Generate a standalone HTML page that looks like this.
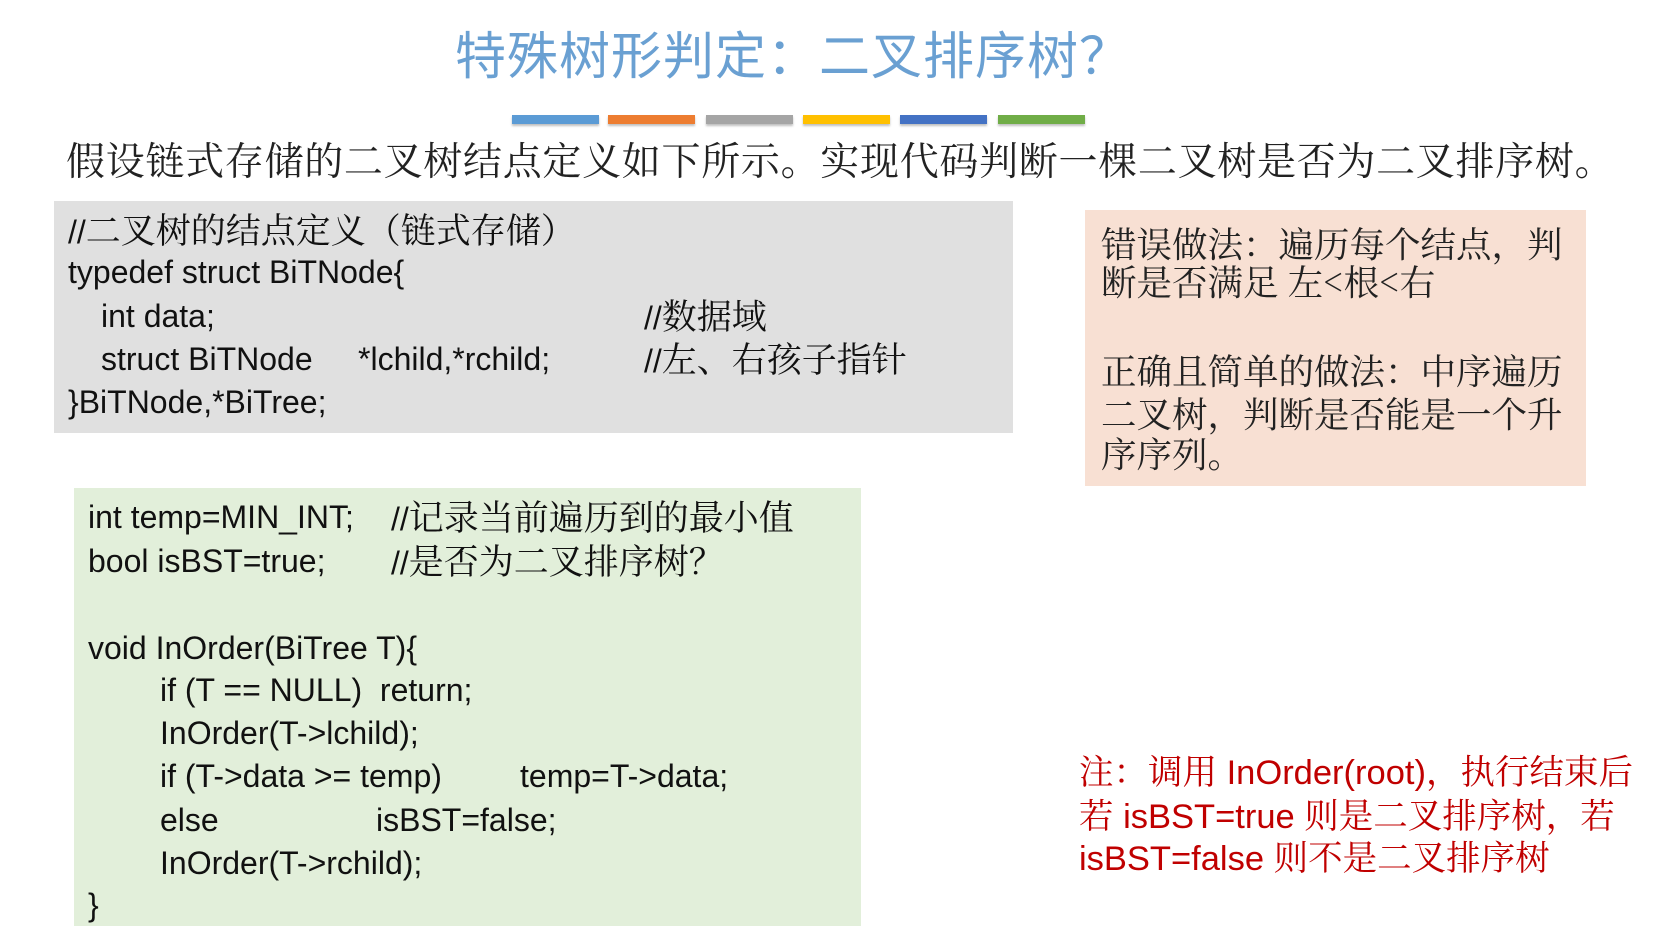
<!DOCTYPE html>
<html><head><meta charset="utf-8"><style>
body{margin:0;width:1671px;height:926px;background:#fff;position:relative;overflow:hidden;font-family:"Liberation Sans","Noto Serif CJK SC",serif}
.a{position:absolute;white-space:pre;line-height:1}
.title{left:455px;top:27px;font-family:"Noto Sans CJK SC",sans-serif;font-size:51px;color:#6aa0d2;letter-spacing:1px}
.bar{position:absolute;top:115px;height:9px;width:87px;box-shadow:0 2px 2px rgba(0,0,0,.25)}
.sub{left:66px;top:140px;font-family:"Noto Serif CJK SC",serif;font-size:39px;color:#222;letter-spacing:0.7px}
.box{position:absolute}
.c{font-size:32px;color:#111}
.c b{font-weight:normal;font-family:"Noto Serif CJK SC",serif;font-size:35px}
.p{font-family:"Noto Serif CJK SC",serif;font-size:35.5px;color:#222}
.r{font-size:34.5px;color:#c00000}
</style></head><body>
<div class="a title">特殊树形判定：二叉排序树？</div>
<div class="bar" style="left:512px;background:#5b9bd5"></div>
<div class="bar" style="left:608px;background:#ed7d31"></div>
<div class="bar" style="left:706px;background:#a5a5a5"></div>
<div class="bar" style="left:803px;background:#ffc000"></div>
<div class="bar" style="left:900px;background:#4472c4"></div>
<div class="bar" style="left:998px;background:#70ad47"></div>
<div class="a sub">假设链式存储的二叉树结点定义如下所示。实现代码判断一棵二叉树是否为二叉排序树。</div>

<div class="box" style="left:54px;top:201px;width:959px;height:232px;background:#e0e0e0"></div>
<div class="a c" style="left:68px;top:212px">//<b>二叉树的结点定义（链式存储）</b></div>
<div class="a c" style="left:68px;top:256px">typedef struct BiTNode{</div>
<div class="a c" style="left:101px;top:300px">int data;</div>
<div class="a c" style="left:644px;top:298px">//<b>数据域</b></div>
<div class="a c" style="left:101px;top:343px">struct BiTNode</div>
<div class="a c" style="left:358px;top:343px">*lchild,*rchild;</div>
<div class="a c" style="left:644px;top:341px">//<b>左、右孩子指针</b></div>
<div class="a c" style="left:68px;top:386px">}BiTNode,*BiTree;</div>

<div class="box" style="left:1085px;top:210px;width:501px;height:276px;background:#f8e0d3"></div>
<div class="a p" style="left:1101px;top:225px">错误做法：遍历每个结点，判</div>
<div class="a p" style="left:1101px;top:263px">断是否满足 左&lt;根&lt;右</div>
<div class="a p" style="left:1101px;top:352px">正确且简单的做法：中序遍历</div>
<div class="a p" style="left:1101px;top:395px">二叉树，判断是否能是一个升</div>
<div class="a p" style="left:1101px;top:435px">序序列。</div>

<div class="box" style="left:74px;top:488px;width:787px;height:438px;background:#e2efda"></div>
<div class="a c" style="left:88px;top:501px">int temp=MIN_INT;</div>
<div class="a c" style="left:391px;top:499px">//<b>记录当前遍历到的最小值</b></div>
<div class="a c" style="left:88px;top:545px">bool isBST=true;</div>
<div class="a c" style="left:391px;top:543px">//<b>是否为二叉排序树？</b></div>
<div class="a c" style="left:88px;top:632px">void InOrder(BiTree T){</div>
<div class="a c" style="left:160px;top:674px">if (T == NULL)  return;</div>
<div class="a c" style="left:160px;top:717px">InOrder(T-&gt;lchild);</div>
<div class="a c" style="left:160px;top:760px">if (T-&gt;data &gt;= temp)</div>
<div class="a c" style="left:520px;top:760px">temp=T-&gt;data;</div>
<div class="a c" style="left:160px;top:804px">else</div>
<div class="a c" style="left:376px;top:804px">isBST=false;</div>
<div class="a c" style="left:160px;top:847px">InOrder(T-&gt;rchild);</div>
<div class="a c" style="left:88px;top:889px">}</div>

<div class="a r" style="left:1079px;top:756px">注：调用 InOrder(root)，执行结束后</div>
<div class="a r" style="left:1079px;top:800px">若 isBST=true 则是二叉排序树，若</div>
<div class="a r" style="left:1079px;top:842px">isBST=false 则不是二叉排序树</div>
</body></html>
